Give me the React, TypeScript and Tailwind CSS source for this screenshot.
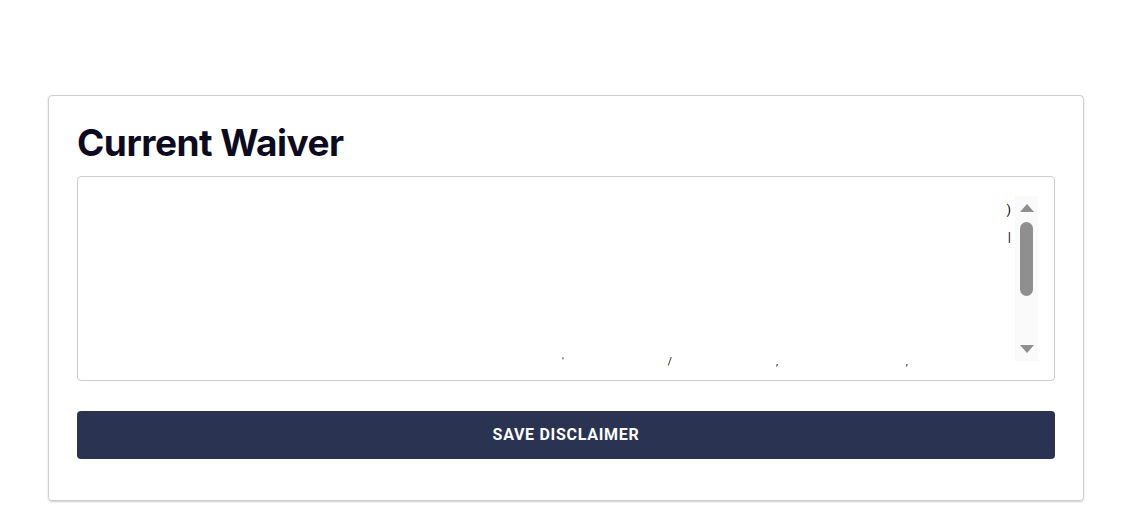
const ScrollBar = () => {
    return (
        <div className="w-[23px] h-full bg-[#fafafa] flex flex-col items-center justify-between py-[8px]">
            <div className="w-0 h-0 border-l-[7px] border-r-[7px] border-b-[8px] border-l-transparent border-r-transparent border-b-[#8f8f8f]" />
            <div className="flex-1 w-full flex flex-col items-center pt-[10px] pb-[48px]">
                <div className="w-[13px] h-[74px] rounded-full bg-[#8f8f8f]" />
            </div>
            <div className="w-0 h-0 border-l-[7px] border-r-[7px] border-t-[8px] border-l-transparent border-r-transparent border-t-[#8f8f8f]" />
        </div>
    )
}

export default function App() {
    return (
        <div className="w-full min-h-screen bg-white pt-[95px] px-[48px] font-['Inter','Liberation_Sans',sans-serif]">
            <div className="w-[1036px] h-[406px] border border-[#cfcfcf] rounded-[4px] shadow-[0_1px_2px_rgba(0,0,0,0.2)] px-[28px] pt-[24px]">
                <h1 className="text-[37px] leading-[45px] font-bold text-[#0b0a1f] tracking-[-0.5px]">Current Waiver</h1>
                <div className="mt-[11px] h-[205px] border border-[#cccccc] rounded-[4px] flex pl-[20px] pr-[16px] py-[19px]">
                    <div className="flex-1 flex flex-col justify-between text-[13px] leading-[27px] text-black font-['Roboto',sans-serif]">
                        <div className="flex flex-col items-end pr-[4px]">
                            <span>)</span>
                            <span>|</span>
                        </div>
                        <div className="flex pl-[464px] gap-[104px] text-[10px] leading-[10px] mb-[-6px]">
                            <span>'</span>
                            <span>/</span>
                            <span>,</span>
                            <span className="ml-[24px]">,</span>
                        </div>
                    </div>
                    <ScrollBar />
                </div>
                <button className="mt-[30px] w-full h-[48px] rounded-[4px] bg-[#2a3452] text-white text-[16px] font-bold uppercase tracking-[0.7px] font-['Roboto',sans-serif]">
                    Save Disclaimer
                </button>
            </div>
        </div>
    )
}
